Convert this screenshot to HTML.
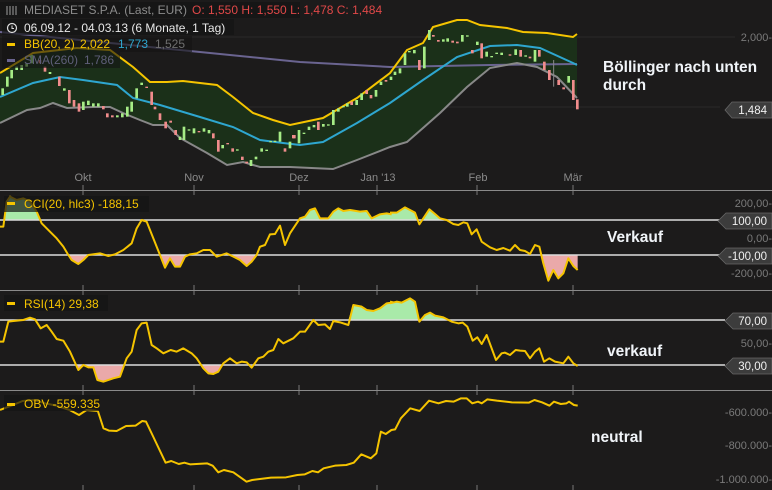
<!DOCTYPE html>
<html><head><meta charset="utf-8"><style>
html,body{margin:0;padding:0;background:#1c1b1b;overflow:hidden}
svg{display:block}
text{font-family:"Liberation Sans",sans-serif}
</style></head><body>
<svg width="772" height="490" viewBox="0 0 772 490" xmlns="http://www.w3.org/2000/svg">
<rect width="772" height="490" fill="#1c1b1b"/>
<line x1="0" y1="37" x2="735" y2="37" stroke="#2a2a2a"/>
<line x1="0" y1="107" x2="720" y2="107" stroke="#2a2a2a"/>
<polygon fill="#1b3019" points="0,73 33,53 77,48 110,50 133,67 150,82 167,82 183,81 217,85 233,97 253,113 273,120 290,125 323,118 357,98 390,73 407,50 423,43 433,27 457,20 467,20 480,25 507,28 523,32 547,33 573,37 577,34 577,98 557,77 537,67 517,63 490,68 467,87 440,113 423,128 407,142 390,147 357,160 333,169 290,167 260,167 243,162 227,165 207,153 180,138 167,125 153,125 140,120 123,113 110,107 93,107 67,108 53,103 40,108 27,110 0,123"/>
<polyline fill="none" stroke="#6a6490" stroke-width="2" points="0,32 100,42 200,52 300,62 390,67 490,65 577,64"/>
<polyline fill="none" stroke="#888" stroke-width="2" points="0,123 27,110 40,108 53,103 67,108 93,107 110,107 123,113 140,120 153,125 167,125 180,138 207,153 227,165 243,162 260,167 290,167 333,169 357,160 390,147 407,142 423,128 440,113 467,87 490,68 517,63 537,67 557,77 577,98"/>
<polyline fill="none" stroke="#2ea6cf" stroke-width="2" points="0,97 33,83 60,77 83,80 117,85 133,98 160,105 200,117 233,127 260,140 283,143 300,145 323,142 357,123 390,103 423,80 457,57 490,46 517,45 540,48 573,63 577,65"/>
<polyline fill="none" stroke="#f5c400" stroke-width="2" points="0,73 33,53 77,48 110,50 133,67 150,82 167,82 183,81 217,85 233,97 253,113 273,120 290,125 323,118 357,98 390,73 407,50 423,43 433,27 457,20 467,20 480,25 507,28 523,32 547,33 573,37 577,34"/>
<g transform="translate(0,10) scale(0.33333)">
<g fill="#a6ec86">
<rect x="4" y="235" width="8" height="20"/><rect x="18" y="200" width="8" height="30"/><rect x="31" y="180" width="8" height="25"/><rect x="46" y="170" width="8" height="10"/><rect x="61" y="165" width="8" height="15"/><rect x="76" y="160" width="8" height="10"/><rect x="91" y="135" width="8" height="25"/>
<rect x="146" y="186" width="8" height="6"/><rect x="189" y="235" width="8" height="7"/><rect x="246" y="275" width="8" height="25"/><rect x="261" y="272" width="8" height="13"/><rect x="276" y="280" width="8" height="10"/><rect x="291" y="280" width="8" height="10"/><rect x="348" y="316" width="8" height="6"/><rect x="363" y="310" width="8" height="12"/><rect x="378" y="290" width="8" height="30"/><rect x="391" y="275" width="8" height="30"/><rect x="406" y="235" width="8" height="30"/><rect x="421" y="218" width="8" height="7"/>
<rect x="536" y="380" width="8" height="10"/><rect x="548" y="350" width="8" height="40"/><rect x="563" y="358" width="8" height="4"/><rect x="578" y="355" width="8" height="15"/><rect x="608" y="355" width="8" height="10"/><rect x="623" y="360" width="8" height="10"/><rect x="664" y="405" width="8" height="10"/><rect x="708" y="418" width="8" height="4"/><rect x="749" y="450" width="8" height="18"/><rect x="764" y="440" width="8" height="8"/><rect x="781" y="415" width="8" height="10"/><rect x="796" y="419" width="8" height="4"/><rect x="808" y="393" width="8" height="4"/><rect x="821" y="392" width="8" height="4"/><rect x="836" y="365" width="8" height="30"/><rect x="866" y="395" width="8" height="20"/>
</g>
<g fill="#f08c8c">
<rect x="116" y="150" width="8" height="10"/><rect x="131" y="170" width="8" height="15"/><rect x="174" y="200" width="8" height="28"/><rect x="204" y="240" width="8" height="40"/><rect x="218" y="270" width="8" height="20"/><rect x="233" y="280" width="8" height="25"/><rect x="306" y="288" width="8" height="10"/><rect x="318" y="310" width="8" height="12"/><rect x="333" y="316" width="8" height="6"/><rect x="436" y="230" width="8" height="4"/><rect x="451" y="245" width="8" height="40"/><rect x="461" y="290" width="8" height="8"/><rect x="476" y="310" width="8" height="20"/><rect x="493" y="335" width="8" height="20"/><rect x="508" y="332" width="8" height="6"/><rect x="523" y="360" width="8" height="15"/><rect x="593" y="363" width="8" height="4"/><rect x="636" y="370" width="8" height="15"/><rect x="651" y="390" width="8" height="35"/><rect x="679" y="399" width="8" height="4"/><rect x="694" y="415" width="8" height="10"/><rect x="723" y="440" width="8" height="10"/><rect x="736" y="455" width="8" height="5"/><rect x="851" y="415" width="8" height="10"/><rect x="879" y="375" width="8" height="10"/>
</g></g>
<g transform="translate(290,10) scale(0.33333)">
<g fill="#a6ec86">
<rect x="23" y="360" width="8" height="40"/><rect x="38" y="368" width="8" height="4"/><rect x="53" y="350" width="8" height="10"/><rect x="68" y="345" width="8" height="7"/><rect x="96" y="342" width="8" height="8"/><rect x="111" y="343" width="8" height="4"/><rect x="126" y="300" width="8" height="45"/><rect x="141" y="295" width="8" height="10"/><rect x="156" y="288" width="8" height="4"/><rect x="168" y="280" width="8" height="10"/><rect x="196" y="270" width="8" height="15"/><rect x="211" y="250" width="8" height="20"/><rect x="254" y="240" width="8" height="20"/><rect x="269" y="215" width="8" height="10"/><rect x="299" y="200" width="8" height="10"/><rect x="311" y="185" width="8" height="10"/><rect x="326" y="175" width="8" height="15"/><rect x="341" y="130" width="8" height="35"/><rect x="354" y="123" width="8" height="4"/><rect x="369" y="120" width="8" height="10"/><rect x="399" y="110" width="8" height="65"/><rect x="414" y="60" width="8" height="30"/><rect x="456" y="88" width="8" height="7"/><rect x="469" y="85" width="8" height="10"/><rect x="513" y="75" width="8" height="20"/><rect x="528" y="76" width="8" height="4"/><rect x="558" y="95" width="8" height="10"/><rect x="586" y="125" width="8" height="15"/><rect x="601" y="138" width="8" height="4"/><rect x="616" y="128" width="8" height="4"/><rect x="631" y="128" width="8" height="7"/><rect x="673" y="118" width="8" height="17"/><rect x="703" y="136" width="8" height="4"/><rect x="731" y="120" width="8" height="35"/><rect x="832" y="198" width="8" height="20"/>
</g>
<g fill="#f08c8c">
<rect x="6" y="375" width="8" height="10"/><rect x="81" y="335" width="8" height="25"/><rect x="181" y="275" width="8" height="10"/><rect x="226" y="240" width="8" height="12"/><rect x="239" y="255" width="8" height="10"/><rect x="284" y="210" width="8" height="5"/><rect x="384" y="150" width="8" height="30"/><rect x="426" y="75" width="8" height="5"/><rect x="441" y="90" width="8" height="5"/><rect x="484" y="92" width="8" height="6"/><rect x="498" y="95" width="8" height="5"/><rect x="543" y="120" width="8" height="10"/><rect x="571" y="100" width="8" height="45"/><rect x="656" y="133" width="8" height="4"/><rect x="688" y="120" width="8" height="20"/><rect x="716" y="140" width="8" height="5"/><rect x="744" y="120" width="8" height="20"/><rect x="759" y="155" width="8" height="25"/><rect x="774" y="180" width="8" height="30"/><rect x="802" y="210" width="8" height="15"/><rect x="817" y="232" width="8" height="6"/><rect x="846" y="210" width="8" height="60"/><rect x="858" y="268" width="8" height="30"/>
</g>
<line x1="791" y1="150" x2="791" y2="230" stroke="#888" stroke-width="3"/>
</g>
<g fill="#8a8a8a" font-size="11" text-anchor="middle">
<text x="83" y="181">Okt</text><text x="194" y="181">Nov</text><text x="299" y="181">Dez</text><text x="378" y="181">Jan '13</text><text x="478" y="181">Feb</text><text x="573" y="181">Mär</text>
</g>
<g stroke="#8a8a8a"><line x1="0" y1="190.5" x2="772" y2="190.5"/><line x1="0" y1="290.5" x2="772" y2="290.5"/><line x1="0" y1="390.5" x2="772" y2="390.5"/></g>
<g stroke="#777"><path d="M83 185v5M194 185v5M299 185v5M377 185v5M477 185v5M573 185v5M83 191v4M194 191v4M299 191v4M377 191v4M477 191v4M573 191v4M83 285v5M194 285v5M299 285v5M377 285v5M477 285v5M573 285v5M83 291v4M194 291v4M299 291v4M377 291v4M477 291v4M573 291v4M83 385v5M194 385v5M299 385v5M377 385v5M477 385v5M573 385v5M83 391v4M194 391v4M299 391v4M377 391v4M477 391v4M573 391v4M83 485v5M194 485v5M299 485v5M377 485v5M477 485v5M573 485v5"/></g>
<defs>
<clipPath id="cciUp" clipPathUnits="userSpaceOnUse"><rect x="0" y="190" width="772" height="30"/></clipPath>
<clipPath id="cciDn" clipPathUnits="userSpaceOnUse"><rect x="0" y="255" width="772" height="35"/></clipPath>
<clipPath id="rsiUp" clipPathUnits="userSpaceOnUse"><rect x="0" y="290" width="772" height="30"/></clipPath>
<clipPath id="rsiDn" clipPathUnits="userSpaceOnUse"><rect x="0" y="365" width="772" height="25"/></clipPath>
</defs>
<g clip-path="url(#cciUp)" fill="#a9eaa9">
<g transform="translate(0,185) scale(0.33333)"><path d="M0,105 L0,125 10,125 20,50 30,35 50,45 70,40 90,50 110,80 125,115 150,140 170,160 190,185 205,210 215,225 235,237 250,225 265,210 300,205 325,213 345,208 370,195 395,175 410,130 425,105 440,110 460,160 480,210 495,248 510,220 525,245 540,245 555,215 570,208 590,205 610,195 630,195 650,215 680,205 700,215 720,225 740,243 755,230 770,210 780,185 795,180 810,148 825,147 840,122 855,180 870,145 900,100 915,95 930,75 945,70 960,100 985,100 1000,80 1015,70 1030,78 1050,75 1080,80 1100,78 1115,100 1140,88 1160,85 1175,88 1172,105 Z"/></g>
<g transform="translate(390,190) scale(0.33333)"><path d="M0,90 L0,68 20,68 45,52 75,68 88,103 100,85 118,58 135,72 150,85 170,90 190,102 205,105 220,97 232,100 245,133 245,90 Z"/></g>
</g>
<g clip-path="url(#cciDn)" fill="#eaa9a9">
<g transform="translate(0,185) scale(0.33333)"><path d="M0,210 L0,125 10,125 20,50 30,35 50,45 70,40 90,50 110,80 125,115 150,140 170,160 190,185 205,210 215,225 235,237 250,225 265,210 300,205 325,213 345,208 370,195 395,175 410,130 425,105 440,110 460,160 480,210 495,248 510,220 525,245 540,245 555,215 570,208 590,205 610,195 630,195 650,215 680,205 700,215 720,225 740,243 755,230 770,210 780,185 780,210 Z"/></g>
<g transform="translate(390,190) scale(0.33333)"><path d="M448,195 L448,170 460,220 475,272 490,240 505,265 520,250 535,205 550,228 563,240 563,195 Z"/></g>
</g>
<g stroke="#dcdcdc" stroke-width="1.5"><line x1="0" y1="220" x2="720" y2="220"/><line x1="0" y1="255" x2="720" y2="255"/></g>
<g fill="none" stroke="#f5c400" stroke-width="2" stroke-linejoin="round">
<g transform="translate(0,185) scale(0.33333)"><polyline vector-effect="non-scaling-stroke" points="0,125 10,125 20,50 30,35 50,45 70,40 90,50 110,80 125,115 150,140 170,160 190,185 205,210 215,225 235,237 250,225 265,210 300,205 325,213 345,208 370,195 395,175 410,130 425,105 440,110 460,160 480,210 495,248 510,220 525,245 540,245 555,215 570,208 590,205 610,195 630,195 650,215 680,205 700,215 720,225 740,243 755,230 770,210 780,185 795,180 810,148 825,147 840,122 855,180 870,145 900,100 915,95 930,75 945,70 960,100 985,100 1000,80 1015,70 1030,78 1050,75 1080,80 1100,78 1115,100 1140,88 1160,85 1175,88"/></g>
<g transform="translate(390,190) scale(0.33333)"><polyline vector-effect="non-scaling-stroke" points="0,68 20,68 45,52 75,68 88,103 100,85 118,58 135,72 150,85 170,90 190,102 205,105 220,97 232,100 245,133 260,118 275,155 300,172 320,180 340,174 360,182 375,165 390,180 405,183 420,192 435,165 448,170 460,220 475,272 490,240 505,265 520,250 535,205 550,228 563,240"/></g>
</g>
<g clip-path="url(#rsiUp)" fill="#a9eaa9">
<g transform="translate(0,185) scale(0.33333)"><path d="M0,405 L0,470 10,470 25,410 40,408 70,405 90,398 105,403 110,405 Z M1045,405 L1060,360 1085,365 1100,375 1120,378 1140,370 1160,355 1180,352 1200,350 1200,405 Z"/></g>
<g transform="translate(390,190) scale(0.33333)"><path d="M0,390 L0,340 20,335 35,338 60,325 75,335 88,395 105,375 120,368 135,377 160,382 170,390 Z"/></g>
</g>
<g clip-path="url(#rsiDn)" fill="#eaa9a9">
<g transform="translate(0,185) scale(0.33333)"><path d="M0,540 L210,500 235,555 250,540 265,547 280,547 292,585 310,590 340,580 360,575 380,520 395,500 600,540 610,550 625,565 640,567 655,560 670,535 700,540 Z"/></g>
</g>
<g stroke="#dcdcdc" stroke-width="1.5"><line x1="0" y1="320" x2="725" y2="320"/><line x1="0" y1="365" x2="725" y2="365"/></g>
<g fill="none" stroke="#f5c400" stroke-width="2" stroke-linejoin="round">
<g transform="translate(0,185) scale(0.33333)"><polyline vector-effect="non-scaling-stroke" points="0,470 10,470 25,410 40,408 70,405 90,398 105,403 122,430 140,420 155,440 170,462 190,467 210,500 235,555 250,540 265,547 280,547 292,585 310,590 340,580 360,575 380,520 395,500 410,435 425,415 440,413 455,480 470,490 490,505 512,495 530,500 550,490 575,505 590,520 610,550 625,565 640,567 655,560 670,535 690,520 710,535 725,530 740,532 755,548 775,520 790,515 805,500 820,495 835,462 850,475 880,460 900,440 915,440 940,405 955,420 975,418 990,432 1000,408 1020,412 1045,420 1060,360 1085,365 1100,375 1120,378 1140,370 1160,355 1180,352 1170,350"/></g>
<g transform="translate(390,190) scale(0.33333)"><polyline vector-effect="non-scaling-stroke" points="0,340 20,335 35,338 60,325 75,335 88,395 105,375 120,368 135,377 160,382 185,395 205,400 218,398 232,410 248,452 262,442 275,462 290,435 318,510 335,490 345,488 360,495 377,480 390,482 405,483 420,505 435,485 448,475 462,515 478,505 495,515 520,520 535,500 550,520 563,528"/></g>
<g transform="translate(0,385) scale(0.37636,0.33333)"><polyline vector-effect="non-scaling-stroke" points="0,75 30,62 60,48 90,45 120,55 150,62 185,75 210,90 230,75 260,78 275,130 290,137 310,138 335,123 360,122 378,108 388,110 405,150 440,233 455,228 475,237 490,233 505,238 550,235 565,242 580,262 595,255 620,262 655,290 670,285 720,278 760,277 790,270 810,268 830,258 845,262 860,250 890,242 920,240 940,233 960,208 985,220 1000,205 1012,140 1025,147 1040,135 1050,133 1065,100 1090,70 1115,78 1140,47 1165,55 1185,48 1205,50 1225,40 1240,40 1255,55 1270,50 1280,55 1295,43 1320,47 1360,52 1405,53 1420,45 1440,52 1460,62 1472,50 1490,57 1505,55 1512,50 1525,60 1535,62"/></g>
</g>
<g font-size="12">
<rect x="0" y="2" width="300" height="16" fill="#141414" opacity="0.7"/>
<rect x="2" y="19" width="232" height="16" fill="#141414" opacity="0.7"/>
<rect x="2" y="36" width="190" height="16" fill="#141414" opacity="0.6"/>
<rect x="2" y="52" width="118" height="16" fill="#141414" opacity="0.6"/>
<g stroke="#888" stroke-width="1.2"><path d="M7 6v9M10 6v9M13 6v9M16 6v9"/></g>
<text x="24" y="14" fill="#8c8c8c">MEDIASET S.P.A. (Last, EUR)</text>
<text x="192" y="14" fill="#e04848">O: 1,550  H: 1,550  L: 1,478  C: 1,484</text>
<circle cx="12" cy="28" r="4.5" fill="none" stroke="#ddd" stroke-width="1.2"/><path d="M12 25.5v3h2" stroke="#ddd" fill="none" stroke-width="1"/>
<text x="24" y="32" fill="#e8e8e8">06.09.12 - 04.03.13 (6 Monate, 1 Tag)</text>
<rect x="7" y="43" width="8" height="3" fill="#f5c400"/>
<text x="24" y="48" fill="#f5c400">BB(20, 2)</text>
<text x="80" y="48" fill="#f5c400">2,022</text>
<text x="118" y="48" fill="#2ea6cf">1,773</text>
<text x="155" y="48" fill="#6e6e6e">1,525</text>
<rect x="7" y="59" width="8" height="3" fill="#6a6490"/>
<text x="24" y="64" fill="#5f5f7a">SMA(260)</text>
<text x="84" y="64" fill="#5f5f7a">1,786</text>
<rect x="4" y="196" width="145" height="16" fill="#141414" opacity="0.7"/>
<rect x="7" y="202" width="8" height="3" fill="#f5c400"/>
<text x="24" y="208" fill="#f5c400">CCI(20, hlc3)  -188,15</text>
<rect x="4" y="295" width="104" height="16" fill="#141414" opacity="0.7"/>
<rect x="7" y="302" width="8" height="3" fill="#f5c400"/>
<text x="24" y="308" fill="#f5c400">RSI(14)  29,38</text>
<rect x="4" y="395" width="96" height="16" fill="#141414" opacity="0.7"/>
<rect x="7" y="403" width="8" height="3" fill="#f5c400"/>
<text x="24" y="408" fill="#f5c400">OBV -559.335</text>
</g>
<g font-size="11" fill="#7a7a7a" text-anchor="end">
<text x="772" y="41">2,000-</text>
<text x="772" y="207">200,00-</text>
<text x="772" y="242">0,00-</text>
<text x="772" y="277">-200,00-</text>
<text x="772" y="347">50,00-</text>
<text x="772" y="416">-600.000-</text>
<text x="772" y="449">-800.000-</text>
<text x="772" y="483">-1.000.000-</text>
</g>
<g fill="#3c3c3c" stroke="#666" stroke-width="0.8">
<path d="M725 110 L732 102 L772 102 L772 118 L732 118 Z"/>
<path d="M718 221 L726 213 L772 213 L772 229 L726 229 Z"/>
<path d="M718 256 L726 248 L772 248 L772 264 L726 264 Z"/>
<path d="M725 321 L733 313 L772 313 L772 329 L733 329 Z"/>
<path d="M725 366 L733 358 L772 358 L772 374 L733 374 Z"/>
</g>
<g font-size="11.5" fill="#f0f0f0" text-anchor="end">
<text x="767" y="114">1,484</text>
<text x="767" y="225">100,00</text>
<text x="767" y="260">-100,00</text>
<text x="767" y="325">70,00</text>
<text x="767" y="370">30,00</text>
</g>
<g font-size="15.5" font-weight="bold" fill="#f0f4f8">
<text x="603" y="72">Böllinger nach unten</text>
<text x="603" y="90">durch</text>
<text x="607" y="242">Verkauf</text>
<text x="607" y="356">verkauf</text>
<text x="591" y="442">neutral</text>
</g>
</svg>
</body></html>
